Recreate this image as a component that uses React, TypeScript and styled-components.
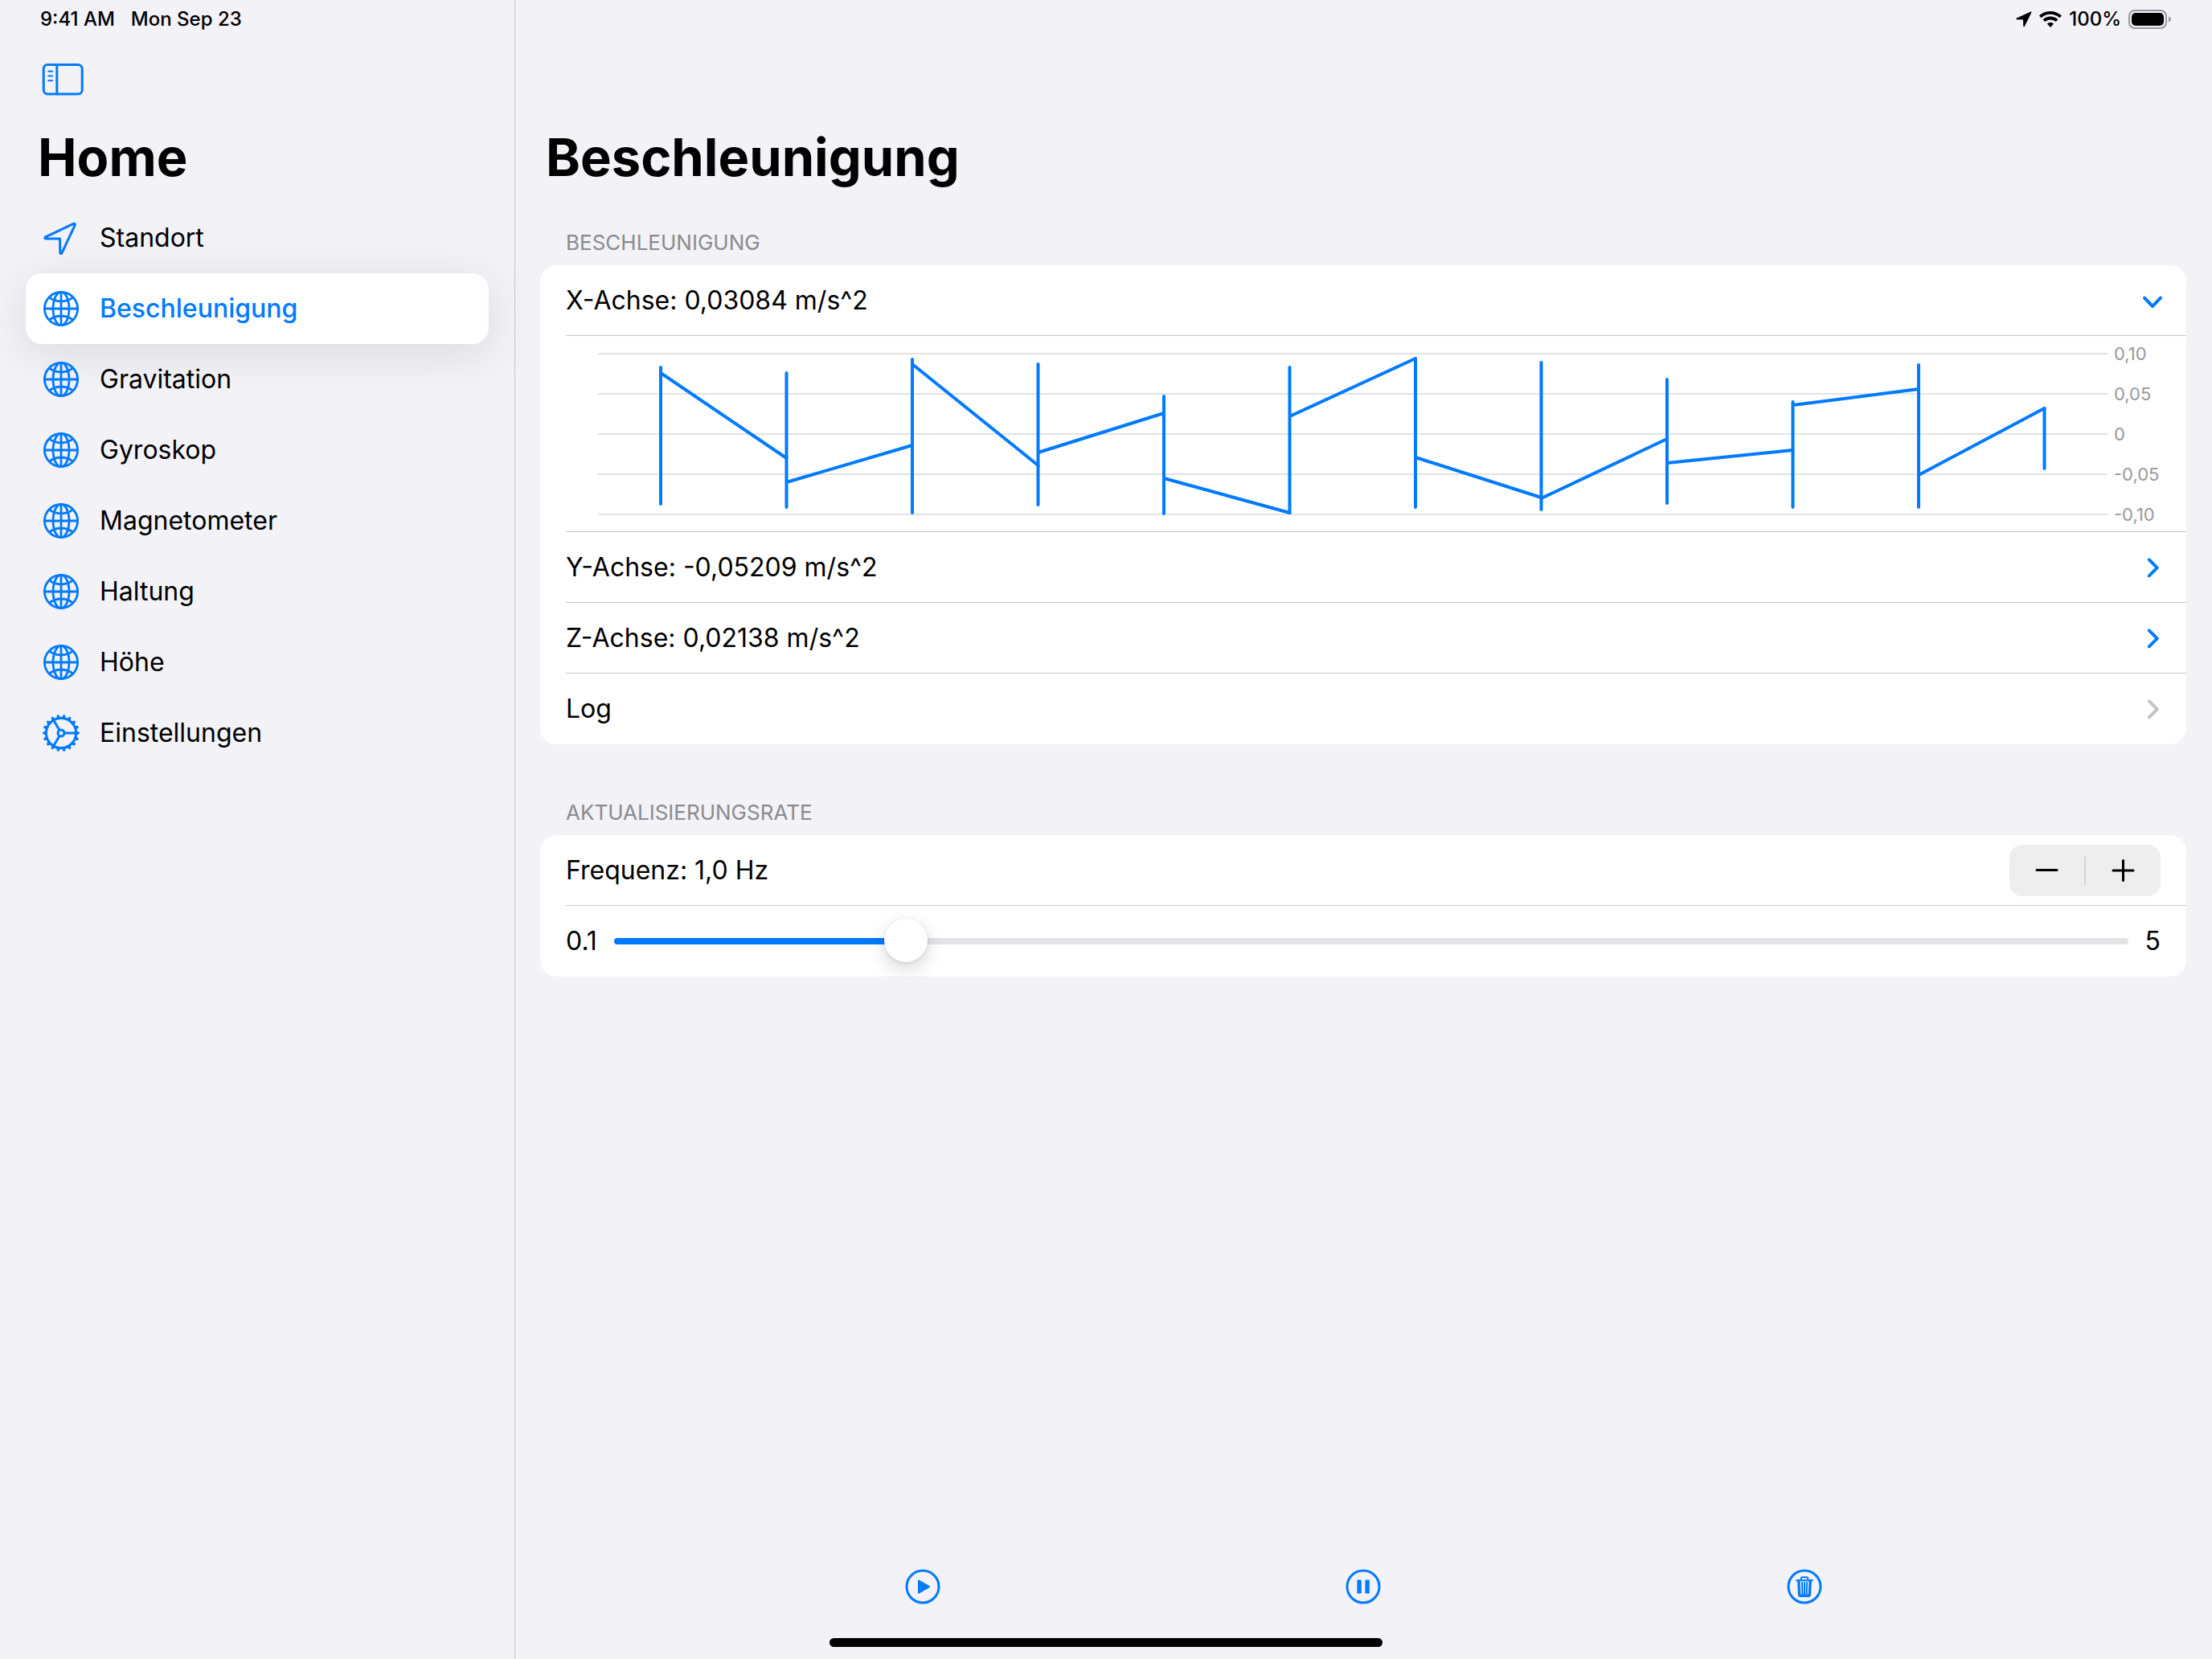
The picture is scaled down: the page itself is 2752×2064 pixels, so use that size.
import { useState } from "react";
import type { ReactNode } from "react";
import styled, { createGlobalStyle } from "styled-components";

const blue = "#007aff";
const canvas = "#f2f2f7";
const hairline = "#c6c6c8";
const secondary = "#8a8a8e";

const GlobalStyle = createGlobalStyle`
  *, *::before, *::after { box-sizing: border-box; }
  body {
    margin: 0;
    background: ${canvas};
    color: #000;
    font-family: Inter, "Liberation Sans", sans-serif;
    font-size: 32px;
    line-height: 44px;
  }
  h1, h2, ul, p { margin: 0; padding: 0; }
  ul { list-style: none; }
  button, a, input { font: inherit; color: inherit; }
  button { margin: 0; padding: 0; border: 0; background: none; text-align: left; }
  a { text-decoration: none; }
  svg { display: block; flex: none; overflow: visible; }
`;

const Screen = styled.div`
  display: flex;
  min-height: 100vh;
`;

const Sidebar = styled.aside`
  flex: 0 0 641px;
  border-right: 1px solid ${hairline};
`;

const Main = styled.main`
  flex: 1;
  min-width: 0;
  display: flex;
  flex-direction: column;
`;

const StatusBar = styled.div<{ $end?: boolean }>`
  display: flex;
  align-items: center;
  justify-content: ${(p) => (p.$end ? "flex-end" : "flex-start")};
  gap: ${(p) => (p.$end ? 9 : 20)}px;
  height: 48px;
  padding: 0 50px;
  font-size: 24px;
  font-weight: 500;
  line-height: 28px;
`;

const NavigationBar = styled.div`
  display: flex;
  align-items: center;
  height: 100px;
  padding: 0 52px;
`;

const Title = styled.h1<{ $inset: number }>`
  padding-left: ${(p) => p.$inset}px;
  font-size: 65px;
  font-weight: 700;
  line-height: 96px;
`;

const Menu = styled.ul`
  padding: 8px 32px;
`;

const MenuLink = styled.a<{ $active?: boolean }>`
  position: relative;
  display: flex;
  align-items: center;
  gap: 26px;
  height: 88px;
  padding: 0 22px;
  border-radius: 20px;
  background: ${(p) => (p.$active ? "#fff" : "transparent")};
  box-shadow: ${(p) => (p.$active ? "0 12px 60px rgba(0, 0, 0, 0.1)" : "none")};
  color: ${(p) => (p.$active ? blue : "#000")};
  font-weight: ${(p) => (p.$active ? 500 : 400)};
  z-index: ${(p) => (p.$active ? 0 : 1)};

  svg { color: ${blue}; }
`;

const Sections = styled.div`
  flex: 1;
  display: flex;
  flex-direction: column;
  gap: 69px;
  padding: 42px 32px 0 31px;
`;

const SectionLabel = styled.h2`
  margin-bottom: 12px;
  padding-left: 32px;
  color: ${secondary};
  font-size: 26px;
  font-weight: 400;
  line-height: 32px;
  text-transform: uppercase;
`;

const Card = styled.ul`
  padding-left: 32px;
  border-radius: 20px;
  background: #fff;
`;

const Cell = styled.li`
  border-bottom: 1px solid ${hairline};

  &:last-child { border-bottom-color: transparent; }
`;

const Line = styled.div`
  display: flex;
  align-items: center;
  justify-content: space-between;
  width: 100%;
  height: 87px;
  padding-right: 32px;
`;

const LineButton = styled(Line).attrs({ as: "button" })``;
const LineLink = styled(Line).attrs({ as: "a" })``;

const ChartBox = styled.div`
  display: flex;
  gap: 8px;
  height: 243px;
  padding: 8px 32px 7px 40px;
`;

const Plot = styled.svg`
  flex: 1;
  min-width: 0;
  height: 228px;
`;

const Scale = styled.div`
  display: flex;
  flex-direction: column;
  justify-content: space-between;
  width: 58px;
  color: #98989c;
  font-size: 22px;
  line-height: 28px;
  white-space: nowrap;
`;

const Stepper = styled.div`
  display: flex;
  align-items: center;
  width: 188px;
  height: 64px;
  border-radius: 16px;
  background: #eeeeef;
`;

const StepButton = styled.button`
  flex: 1;
  display: flex;
  align-items: center;
  justify-content: center;
  height: 64px;
`;

const StepDivider = styled.span`
  width: 2px;
  height: 36px;
  border-radius: 1px;
  background: #d5d5d6;
`;

const SliderLine = styled(Line)`
  gap: 21px;
`;

const Slider = styled.input`
  appearance: none;
  flex: 1;
  min-width: 0;
  height: 54px;
  margin: 0;
  background: none;

  &::-webkit-slider-runnable-track {
    height: 8px;
    border-radius: 4px;
    background: linear-gradient(to right, ${blue} var(--filled), #e4e4e6 var(--filled));
  }

  &::-webkit-slider-thumb {
    appearance: none;
    width: 54px;
    height: 54px;
    margin-top: -24px;
    border-radius: 50%;
    background: #fff;
    box-shadow: 0 8px 22px rgba(0, 0, 0, 0.16), 0 1px 4px rgba(0, 0, 0, 0.1);
  }
`;

const Toolbar = styled.footer`
  display: grid;
  grid-template-columns: repeat(3, 1fr);
  justify-items: center;
  padding: 0 11% 68px;
`;

const IconButton = styled.button`
  color: ${blue};
`;

const HomeIndicator = styled.div`
  position: fixed;
  bottom: 15px;
  left: 50%;
  width: 25vw;
  height: 11px;
  border-radius: 6px;
  background: #000;
  transform: translateX(-50%);
`;

const stroke = { fill: "none", stroke: "currentColor", strokeLinecap: "round", strokeLinejoin: "round" } as const;

const SidebarIcon = () => (
  <svg width="52" height="40" viewBox="0 0 52 40" {...stroke} strokeWidth="3" aria-hidden="true">
    <rect x="2.2" y="2.6" width="48" height="36.4" rx="5" />
    <path d="M18.8 2.8v36" />
    <path d="M8.2 10.8h5M8.2 16.6h5M8.2 22.2h5" strokeWidth="2" />
  </svg>
);

const ArrowIcon = () => (
  <svg width="44" height="44" viewBox="0 0 44 44" {...stroke} strokeWidth="3" aria-hidden="true">
    <path d="M37.4 4.4 2.6 20.8Q0.8 22.6 3.2 22.9L20.6 23 20.8 40.4Q21.6 42.6 23 40.6L39.2 6.2Q39.8 3.6 37.4 4.4Z" />
  </svg>
);

const GlobeIcon = () => (
  <svg width="44" height="44" viewBox="0 0 44 44" {...stroke} strokeWidth="2.8" aria-hidden="true">
    <circle cx="22" cy="22" r="20.6" />
    <ellipse cx="22" cy="22" rx="10" ry="20.6" />
    <path d="M22 1.4v41.2M1.4 22h41.2M7.6 8.4Q22 17.6 36.4 8.4M7.6 35.6Q22 26.4 36.4 35.6" />
  </svg>
);

const teeth = Array.from({ length: 18 }, (_, i) => i * 20);

const GearIcon = () => (
  <svg width="44" height="44" viewBox="0 0 44 44" {...stroke} strokeWidth="3" aria-hidden="true">
    <circle cx="22" cy="22" r="18.6" />
    <circle cx="22" cy="22" r="4" />
    <path d="M26 22h14.6M20 18.5 12.7 5.9M20 25.5 12.7 38.1" />
    {teeth.map((a) => (
      <path key={a} d="M40.4 19.8 44.4 21.2V22.8L40.4 24.2Z" fill="currentColor" strokeWidth="1" transform={`rotate(${a} 22 22)`} />
    ))}
  </svg>
);

const Chevron = ({ open, muted }: { open?: boolean; muted?: boolean }) => (
  <svg width="20" height="28" viewBox="0 0 20 28" {...stroke} stroke={muted ? "#c4c4c6" : blue} strokeWidth="4" aria-hidden="true">
    <path d={open ? "M0 10.6 10 21 20 10.6" : "M5.8 4.4 15.8 14.4 5.8 24.4"} />
  </svg>
);

const LocationGlyph = () => (
  <svg width="20" height="20" viewBox="0 0 20 20" fill="currentColor" aria-hidden="true">
    <path d="M18 .7 1 8.5C-.2 9.2.1 10.2 1.4 10.3L9 10.5 9.2 18.2C9.3 19.6 10.4 19.8 11 18.5L19.2 2C19.7.8 19 .2 18 .7Z" />
  </svg>
);

const WifiGlyph = () => (
  <svg width="28" height="20" viewBox="0 0 28 20" fill="none" stroke="currentColor" strokeWidth="3.8" aria-hidden="true">
    <path d="M1.3 6.9C8.5 .1 19.5 .1 26.7 6.9" />
    <path d="M5.9 11.7C10.6 7.4 17.4 7.4 22.1 11.7" />
    <path d="M14 20 9.8 15.6C12.2 13.5 15.8 13.5 18.2 15.6Z" fill="currentColor" stroke="none" />
  </svg>
);

const BatteryGlyph = () => (
  <svg width="54" height="24" viewBox="0 0 54 24" aria-hidden="true">
    <rect x="1" y="1" width="46" height="22" rx="7" fill="none" stroke="#98979b" strokeWidth="2" />
    <rect x="4" y="4" width="40" height="16" rx="5" fill="#000" />
    <path d="M50 8.4Q53 9.6 53 12T50 15.6Z" fill="#98979b" />
  </svg>
);

const Round = ({ children }: { children: ReactNode }) => (
  <svg width="44" height="44" viewBox="0 0 44 44" fill="currentColor" aria-hidden="true">
    <circle cx="22" cy="22" r="20" fill="none" stroke="currentColor" strokeWidth="3" />
    {children}
  </svg>
);

const menu = [
  { label: "Standort", icon: <ArrowIcon /> },
  { label: "Beschleunigung", icon: <GlobeIcon />, active: true },
  { label: "Gravitation", icon: <GlobeIcon /> },
  { label: "Gyroskop", icon: <GlobeIcon /> },
  { label: "Magnetometer", icon: <GlobeIcon /> },
  { label: "Haltung", icon: <GlobeIcon /> },
  { label: "Höhe", icon: <GlobeIcon /> },
  { label: "Einstellungen", icon: <GearIcon /> },
];

// One entry per second: [highest, lowest, value on entering, value on leaving], as plot heights.
const samples: [number, number, number, number][] = [
  [31, 201, 31, 38],
  [38, 205, 144, 174],
  [21, 212, 128, 27],
  [27, 202, 153, 137],
  [67, 213, 88, 169],
  [31, 212, 212, 92],
  [20, 205, 20, 143],
  [25, 208, 193, 194],
  [46, 200, 120, 150],
  [74, 205, 134, 78],
  [28, 205, 58, 165],
  [82, 157, 82, 157],
];

const plotX = (i: number) => 78 + i * 156.5;

const Chart = () => (
  <ChartBox>
    <Plot viewBox="0 0 1878 228" preserveAspectRatio="none" role="img" aria-label="Verlauf der X-Achse">
      {[14, 64, 114, 164, 214].map((y) => (
        <path key={y} d={`M0 ${y}H1878`} stroke="#e2e2e3" strokeWidth="2" />
      ))}
      <g {...stroke} stroke={blue} strokeWidth="4">
        {samples.map(([high, low, , leave], i) => (
          <path
            key={i}
            vectorEffect="non-scaling-stroke"
            d={
              `M${plotX(i)} ${high}V${low}` +
              (i < samples.length - 1 ? `M${plotX(i)} ${leave}L${plotX(i + 1)} ${samples[i + 1][2]}` : "")
            }
          />
        ))}
      </g>
    </Plot>
    <Scale>
      {["0,10", "0,05", "0", "-0,05", "-0,10"].map((t) => (
        <span key={t}>{t}</span>
      ))}
    </Scale>
  </ChartBox>
);

export default function App() {
  const [open, setOpen] = useState(true);
  const [rate, setRate] = useState(1);
  const step = (d: number) => setRate((r) => Math.min(5, Math.max(0.1, Math.round((r + d) * 10) / 10)));

  return (
    <>
      <GlobalStyle />
      <Screen>
        <Sidebar>
          <StatusBar>
            <span>9:41 AM</span>
            <span>Mon Sep 23</span>
          </StatusBar>
          <NavigationBar>
            <IconButton aria-label="Seitenleiste">
              <SidebarIcon />
            </IconButton>
          </NavigationBar>
          <Title $inset={47}>Home</Title>
          <nav>
            <Menu>
              {menu.map((m) => (
                <li key={m.label}>
                  <MenuLink href="#" $active={m.active}>
                    {m.icon}
                    {m.label}
                  </MenuLink>
                </li>
              ))}
            </Menu>
          </nav>
        </Sidebar>

        <Main>
          <StatusBar $end>
            <LocationGlyph />
            <WifiGlyph />
            <span>100%</span>
            <BatteryGlyph />
          </StatusBar>
          <NavigationBar />
          <Title $inset={38}>Beschleunigung</Title>
          <Sections>
            <section>
              <SectionLabel>Beschleunigung</SectionLabel>
              <Card>
                <Cell>
                  <LineButton aria-expanded={open} onClick={() => setOpen(!open)}>
                    X-Achse: 0,03084 m/s^2
                    <Chevron open={open} />
                  </LineButton>
                </Cell>
                {open && (
                  <Cell>
                    <Chart />
                  </Cell>
                )}
                <Cell>
                  <LineButton aria-expanded={false}>
                    Y-Achse: -0,05209 m/s^2
                    <Chevron />
                  </LineButton>
                </Cell>
                <Cell>
                  <LineButton aria-expanded={false}>
                    Z-Achse: 0,02138 m/s^2
                    <Chevron />
                  </LineButton>
                </Cell>
                <Cell>
                  <LineLink {...{ href: "#" }}>
                    Log
                    <Chevron muted />
                  </LineLink>
                </Cell>
              </Card>
            </section>
            <section>
              <SectionLabel>Aktualisierungsrate</SectionLabel>
              <Card>
                <Cell>
                  <Line>
                    <label htmlFor="rate">Frequenz: {rate.toFixed(1).replace(".", ",")} Hz</label>
                    <Stepper>
                      <StepButton aria-label="Verringern" onClick={() => step(-0.1)}>
                        <svg width="28" height="28" {...stroke} strokeWidth="3">
                          <path d="M1 13.6h25" />
                        </svg>
                      </StepButton>
                      <StepDivider />
                      <StepButton aria-label="Erhöhen" onClick={() => step(0.1)}>
                        <svg width="28" height="28" {...stroke} strokeWidth="3">
                          <path d="M1 14h25M13.5 1.5v25" />
                        </svg>
                      </StepButton>
                    </Stepper>
                  </Line>
                </Cell>
                <Cell>
                  <SliderLine>
                    <span>0.1</span>
                    <Slider
                      id="rate"
                      type="range"
                      min={0.1}
                      max={5}
                      step={0.1}
                      value={rate}
                      onChange={(e) => setRate(Number(e.target.value))}
                      style={{ ["--filled" as string]: `${((rate - 0.1) / 4.9) * 100}%` }}
                    />
                    <span>5</span>
                  </SliderLine>
                </Cell>
              </Card>
            </section>
          </Sections>
          <Toolbar>
            <IconButton aria-label="Start">
              <Round>
                <path d="M16 14.5Q16 12.8 17.6 13.7L30.4 21Q31.7 22 30.4 23L17.6 30.4Q16 31.2 16 29.5Z" />
              </Round>
            </IconButton>
            <IconButton aria-label="Pause">
              <Round>
                <rect x="14.4" y="13.6" width="5.4" height="16.8" rx="1.2" />
                <rect x="24.4" y="13.6" width="5.4" height="16.8" rx="1.2" />
              </Round>
            </IconButton>
            <IconButton aria-label="Löschen">
              <Round>
                <g {...stroke} strokeWidth="2">
                  <path d="M12 14.2h20M17.8 14V11.6Q17.8 10.2 19.2 10.2H24.8Q26.2 10.2 26.2 11.6V14" />
                  <path d="M14.8 14.5 15.6 32Q15.7 33.2 17 33.2H27Q28.3 33.2 28.4 32L29.2 14.5" strokeWidth="3.4" />
                  <path d="M19 17 19.3 31M22 17V31M25 17 24.7 31" />
                </g>
              </Round>
            </IconButton>
          </Toolbar>
        </Main>
      </Screen>
      <HomeIndicator />
    </>
  );
}
